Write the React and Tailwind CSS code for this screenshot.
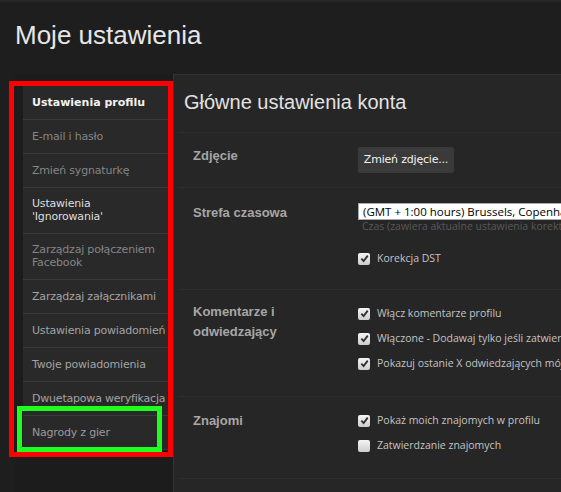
const menu = [
  { label: ['Ustawienia profilu'], cls: 'font-bold text-[#f2f2f2] tracking-normal' },
  { label: ['E-mail i hasło'], cls: 'text-[#858585]' },
  { label: ['Zmień sygnaturkę'], cls: 'text-[#858585]' },
  { label: ['Ustawienia', "'Ignorowania'"], cls: 'text-[#dedede]' },
  { label: ['Zarządzaj połączeniem', 'Facebook'], cls: 'text-[#858585]' },
  { label: ['Zarządzaj załącznikami'], cls: 'text-[#a3a3a3]' },
  { label: ['Ustawienia powiadomień'], cls: 'text-[#a3a3a3]' },
  { label: ['Twoje powiadomienia'], cls: 'text-[#a3a3a3]' },
  { label: ['Dwuetapowa weryfikacja'], cls: 'text-[#a3a3a3]' },
  { label: ['Nagrody z gier'], cls: 'text-[#9a9a9a]' },
]

function Checkbox({ checked }) {
  return (
    <span className="w-[12px] h-[12px] shrink-0 rounded-[2px] bg-linear-to-b from-[#f5f5f5] to-[#cdcdcd] flex items-center justify-center">
      {checked && (
        <svg width="9" height="9" viewBox="0 0 10 10">
          <path d="M1.5 5.2 L4 7.8 L8.6 1.8" stroke="#2e2e2e" strokeWidth="2" fill="none" />
        </svg>
      )}
    </span>
  )
}

function CheckLine({ checked = true, children }) {
  return (
    <div className="h-[25px] flex items-center gap-[7px] whitespace-nowrap text-[10.5px] text-[#c4c4c4] font-['Open_Sans',sans-serif]">
      <Checkbox checked={checked} />
      <span>{children}</span>
    </div>
  )
}

function Label({ children, className = '' }) {
  return (
    <div className={`w-[165px] shrink-0 pr-[15px] font-bold text-[13px] text-[#a6a6a6] ${className}`}>
      {children}
    </div>
  )
}

export default function App() {
  return (
    <div className="w-[561px] h-[492px] overflow-hidden relative bg-[#1e1e1e] font-['Liberation_Sans',Arial,sans-serif]">
      <div className="h-[2px] bg-[#252525]" />
      <h1 className="pl-[15px] pt-[20px] text-[26px] leading-[26px] text-[#e6e6e6]">Moje ustawienia</h1>

      <div className="flex mt-[26px] h-[420px]">
        {/* sidebar */}
        <aside className="w-[158px] shrink-0 ml-[15px] pt-[12px] pl-[8px] bg-[#1c1c1c] font-['DejaVu_Sans',sans-serif] text-[11px] tracking-[-0.2px]">
          {menu.map((m) => (
            <div
              key={m.label.join(' ')}
              className={`bg-[#292929] border-b border-[#3a3a3a] pl-[9px] pr-[4px] py-[10px] whitespace-nowrap ${m.label.length > 1 ? 'leading-[12.5px]' : 'leading-[13px]'} ${m.cls}`}
            >
              {m.label.map((l) => (
                <div key={l}>{l}</div>
              ))}
            </div>
          ))}
        </aside>

        {/* content */}
        <main className="flex-1 min-w-0 overflow-hidden bg-[#262626] border-l border-t border-[#343434] pl-[4px]">
          <h2 className="pl-[6px] pt-[17px] mb-[20px] text-[20px] leading-[20px] text-[#e2e2e2]">Główne ustawienia konta</h2>

          <div className="border-t border-[#2e2e2e] flex pl-[15px] py-[14px]">
            <Label className="leading-[16px] pt-[1px]">Zdjęcie</Label>
            <button className="h-[26px] w-[96px] rounded-[2px] bg-[#3a3a3a] text-[#f2f2f2] text-[11px] font-['DejaVu_Sans',sans-serif] tracking-[-0.2px]">
              Zmień zdjęcie...
            </button>
          </div>

          <div className="border-t border-[#2e2e2e] flex pl-[15px] pt-[11px] pb-[18px]">
            <Label className="leading-[16px] mt-[6px]">Strefa czasowa</Label>
            <div className="min-w-0">
              <div className="mt-[4px] h-[17px] w-[260px] bg-white border border-[#a9a9a9] pl-[4px] flex items-center whitespace-nowrap overflow-hidden text-[11.5px] text-black font-['Open_Sans',sans-serif]">
                (GMT + 1:00 hours) Brussels, Copenhagen, Madrid, Paris
              </div>
              <div className="h-[13px] pl-[4px] leading-[13px] whitespace-nowrap text-[10.5px] text-[#595959] font-['Open_Sans',sans-serif]">
                Czas (zawiera aktualne ustawienia korekty DST)
              </div>
              <div className="mt-[13px]">
                <CheckLine>Korekcja DST</CheckLine>
              </div>
            </div>
          </div>

          <div className="border-t border-[#2e2e2e] flex pl-[15px] pt-[11px] pb-[20px]">
            <Label className="leading-[20px] mt-[1px]">Komentarze i odwiedzający</Label>
            <div>
              <CheckLine>Włącz komentarze profilu</CheckLine>
              <CheckLine>Włączone - Dodawaj tylko jeśli zatwierdzę</CheckLine>
              <CheckLine>Pokazuj ostanie X odwiedzających mój profil</CheckLine>
            </div>
          </div>

          <div className="border-t border-b border-[#2e2e2e] flex pl-[15px] pt-[11px] pb-[20px]">
            <Label className="leading-[16px] mt-[5px]">Znajomi</Label>
            <div>
              <CheckLine>Pokaż moich znajomych w profilu</CheckLine>
              <CheckLine checked={false}>Zatwierdzanie znajomych</CheckLine>
            </div>
          </div>
        </main>
      </div>

      {/* annotation frames */}
      <div className="absolute left-[9px] top-[81px] w-[164px] h-[376px] border-[5px] border-[#ff0000]" />
      <div className="absolute left-[17px] top-[406px] w-[145px] h-[46px] border-[5px] border-[#1eff1e]" />
    </div>
  )
}
